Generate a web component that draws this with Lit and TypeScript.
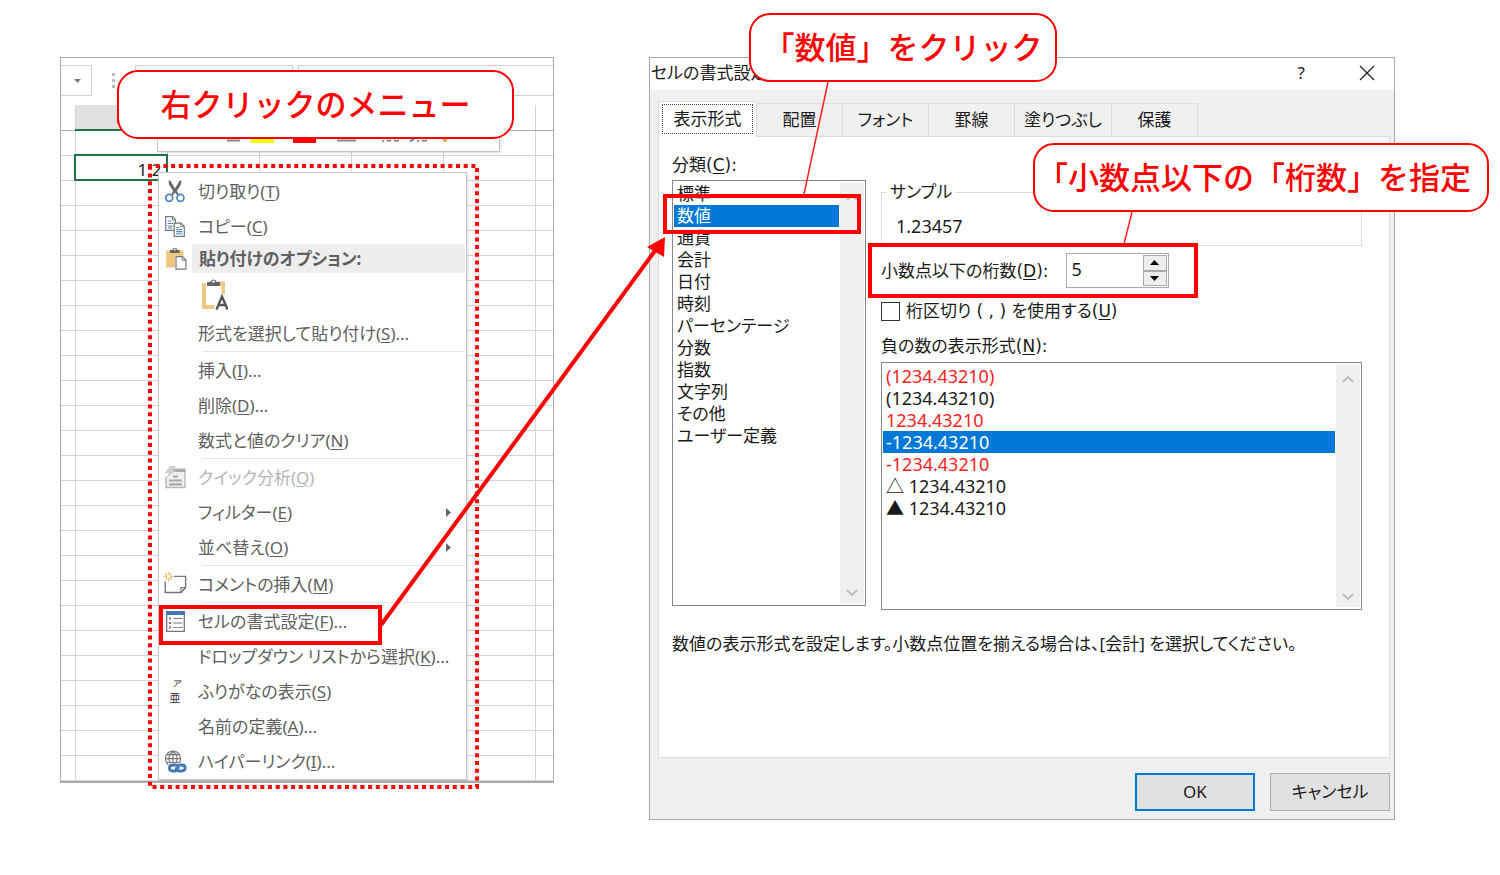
import { LitElement, html, svg, css, nothing } from "lit";
import { customElement, property, state } from "lit/decorators.js";
import { classMap } from "lit/directives/class-map.js";

type MenuEntry =
  | { kind: "item"; label: string; key: string; tail?: string; icon?: string; disabled?: boolean; sub?: boolean }
  | { kind: "heading"; label: string; icon: string }
  | { kind: "paste" }
  | { kind: "sep" };

const MENU: MenuEntry[] = [
  { kind: "item", label: "切り取り", key: "T", icon: "cut" },
  { kind: "item", label: "コピー", key: "C", icon: "copy" },
  { kind: "heading", label: "貼り付けのオプション:", icon: "paste" },
  { kind: "paste" },
  { kind: "item", label: "形式を選択して貼り付け", key: "S", tail: "..." },
  { kind: "sep" },
  { kind: "item", label: "挿入", key: "I", tail: "..." },
  { kind: "item", label: "削除", key: "D", tail: "..." },
  { kind: "item", label: "数式と値のクリア", key: "N" },
  { kind: "sep" },
  { kind: "item", label: "クイック分析", key: "Q", icon: "quick", disabled: true },
  { kind: "item", label: "フィルター", key: "E", sub: true },
  { kind: "item", label: "並べ替え", key: "O", sub: true },
  { kind: "sep" },
  { kind: "item", label: "コメントの挿入", key: "M", icon: "comment" },
  { kind: "sep" },
  { kind: "item", label: "セルの書式設定", key: "F", tail: "...", icon: "format" },
  { kind: "item", label: "ドロップダウン リストから選択", key: "K", tail: "..." },
  { kind: "item", label: "ふりがなの表示", key: "S", icon: "ruby" },
  { kind: "item", label: "名前の定義", key: "A", tail: "..." },
  { kind: "item", label: "ハイパーリンク", key: "I", tail: "...", icon: "link" },
];

const ICONS: Record<string, unknown> = {
  cut: svg`
    <path d="M4.6 .6 L6.2 .6 L11 8.4 L15.8 .6 L17.4 .6 L17 4.6 L12.8 11 L15 14.4 L13.4 15.4 L11 12.6 L8.6 15.4 L7 14.4 L9.2 11 L5 4.6 Z" fill="#666"/>
    <circle cx="5.2" cy="17.8" r="3.5" fill="#fff" stroke="#4f84bd" stroke-width="1.7"/>
    <circle cx="16.4" cy="17.8" r="3.5" fill="#fff" stroke="#4f84bd" stroke-width="1.7"/>`,
  copy: svg`
    <path d="M1.7 1.7 H8.5 L11.5 4.7 V15.3 H1.7 Z" fill="#fff" stroke="#777" stroke-width="1.2"/>
    <path d="M8.3 1.7 V5 H11.5" fill="none" stroke="#777"/>
    <path d="M3.7 6 H7 M3.7 8.5 H9 M3.7 11 H9 M3.7 13 H8" stroke="#4f84bd" stroke-width="1.1"/>
    <path d="M10.2 8.2 H17 L20.3 11.5 V21.4 H10.2 Z" fill="#fff" stroke="#777" stroke-width="1.2"/>
    <path d="M16.8 8.2 V11.7 H20.3" fill="none" stroke="#777"/>
    <path d="M12.2 12.5 H15.5 M12.2 14.5 H18.3 M12.2 16.6 H18.3 M12.2 18.7 H18.3" stroke="#4f84bd" stroke-width="1.1"/>`,
  paste: svg`
    <path d="M2.2 3.5 H19.4 V9 H11 V20.6 H2.2 Z" fill="#efc880"/>
    <path d="M6 3 H8.4 C8.6 0 13 0 13.2 3 H15.6 V6 H6 Z" fill="#666"/>
    <circle cx="10.8" cy="2.6" r="1" fill="#fff"/>
    <path d="M12 9.6 H18.5 L21.9 13 V22.2 H12 Z" fill="#fff" stroke="#777" stroke-width="1.2"/>
    <path d="M18.2 9.6 V13.3 H21.9" fill="none" stroke="#777"/>`,
  quick: svg`
    <path d="M9 3.3 H21 V21.5 H2 V11" fill="#f2f0f2" stroke="#b9b7b9" stroke-width="1.4"/>
    <path d="M9 3 H21 V6 H9 Z" fill="#a9a7a9"/>
    <path d="M6 0 H12 L8.8 4.4 H12 L2 12.4 L5 7 H1 Z" fill="#cfcdcf"/>
    <path d="M9 10.5 H14 M5 14.5 H18 M5 18.3 H18" stroke="#aaa8aa" stroke-width="2.2"/>`,
  comment: svg`
    <path d="M1.2 8.5 V19.5 H17 L21.6 14.6 V3.4 H10" fill="none" stroke="#777" stroke-width="1.4"/>
    <path d="M17 19.5 V14.6 H21.6" fill="none" stroke="#777" stroke-width="1.2"/>
    <path d="M4.5 -1 V2 M4.5 5 V8 M0 3.5 H3 M6 3.5 H9 M1.4 .4 L3.2 2.2 M7.6 .4 L5.8 2.2 M1.4 6.6 L3.2 4.8 M7.6 6.6 L5.8 4.8" stroke="#eebf6c" stroke-width="1.3"/>`,
  format: svg`
    <path d="M2.7 1.7 H20.3 V21.3 H2.7 Z" fill="#fff" stroke="#777" stroke-width="1.3"/>
    <path d="M2 1 H21 V5 H2 Z" fill="#3f78b5"/>
    <path d="M9.5 8.5 H18.5 M9.5 13 H18.5" stroke="#777" stroke-width="1"/>
    <path d="M9.5 17.5 H18.5" stroke="#777" stroke-width="1" stroke-dasharray="4 1"/>
    <path d="M5 7.5 h2 v2 h-2z M5 12 h2 v2 h-2z M5 16.5 h2 v2 h-2z" fill="#777"/>`,
  ruby: svg`
    <text x="12" y="6.5" font-size="9" font-style="italic" text-anchor="middle" fill="#222">ア</text>
    <text x="11" y="22" font-size="11" text-anchor="middle" fill="#333">亜</text>`,
  link: svg`
    <circle cx="9" cy="8.6" r="7.6" fill="#fff" stroke="#777" stroke-width="1.2"/>
    <path d="M9 1 V16.2 M1.4 8.6 H16.6 M2.8 4.6 H15.2 M2.8 12.6 H15.2 M9 1 C3.6 5 3.6 12.2 9 16.2 M9 1 C14.4 5 14.4 12.2 9 16.2" fill="none" stroke="#777" stroke-width="1.1"/>
    <path d="M4 13 H22 V23 H6 Z" fill="#fff"/>
    <path d="M12.5 21 H9 C4.2 21 4.2 15 9 15 H11.5 C14 15 14.8 17.2 13.8 18.8" fill="none" stroke="#3f78b5" stroke-width="2.8"/>
    <path d="M14.5 15 H17.5 C22.4 15 22.4 21 17.5 21 H15.5 C12.6 21 11.8 19 12.8 17.4" fill="none" stroke="#3f78b5" stroke-width="2.8"/>`,
};

const iconSvg = (name: string) =>
  html`<svg width="23" height="23" viewBox="0 0 23 23" overflow="visible" aria-hidden="true">${ICONS[name]}</svg>`;

const hot = (label: string, key: string, tail = "") => html`${label}(<u>${key}</u>)${tail}`;

const FONT = css`"Noto Sans", "Noto Sans CJK JP", sans-serif`;
const DIALOG_FONT = css`"DejaVu Sans", "Noto Sans CJK JP", sans-serif`;

@customElement("context-menu")
export class ContextMenu extends LitElement {
  static styles = css`
    :host { display: block; box-sizing: border-box; border: 1px solid #c6c6c6; background: #fff; padding: 1px 1px 0 0;
      box-shadow: 1px 2px 3px rgba(0, 0, 0, 0.15); }
    .row { display: flex; align-items: center; width: 100%; height: 35px; padding: 0; border: 0; background: none; text-align: left;
      font: 17px/24px ${FONT}; font-feature-settings: "palt"; color: #606060; white-space: nowrap; }
    .row:disabled { color: #b4b4b4; }
    .icon { flex: none; display: flex; justify-content: center; align-items: center; width: 33px; }
    .row .text { flex: 1; padding-left: 6px; }
    .heading { height: 29px; }
    .heading .text { background: #eee; font-weight: 700; line-height: 29px; padding-left: 7px; }
    .paste { height: 43px; padding-left: 39px; }
    .sep { height: 1px; margin: 0 0 1px 44px; background: #e6e6e6; }
    .arrow { width: 5px; height: 9px; margin-right: 14px; background: #666; clip-path: polygon(0 0, 100% 50%, 0 100%); }
    u { text-underline-offset: 2px; text-decoration-thickness: 1px; }
  `;
  render() {
    return MENU.map((m) => {
      if (m.kind === "sep") return html`<div class="sep" role="separator"></div>`;
      if (m.kind === "heading")
        return html`<div class="row heading"><span class="icon">${iconSvg(m.icon)}</span><span class="text">${m.label}</span></div>`;
      if (m.kind === "paste")
        return html`<button class="row paste" aria-label="値">
          <svg width="30" height="34" viewBox="0 0 30 34" aria-hidden="true">
            <path d="M6 5 V29 H16" fill="none" stroke="#efc880" stroke-width="4"/>
            <path d="M19 3.5 H27 V16 H23.5 V8 H19 Z" fill="#efc880"/>
            <path d="M9 4 H12.5 C13 0.5 18 0.5 18.5 4 H22 V8 H9 Z" fill="#666"/>
            <circle cx="15.5" cy="3.6" r="1.2" fill="#fff"/>
            <path d="M18.5 31.5 L24 18.5 L29.5 31.5 M20.5 27 H27.5" fill="none" stroke="#555" stroke-width="2.4"/>
          </svg>
        </button>`;
      return html`<button class="row" ?disabled=${m.disabled}>
        <span class="icon">${m.icon ? iconSvg(m.icon) : nothing}</span>
        <span class="text">${hot(m.label, m.key, m.tail)}</span>
        ${m.sub ? html`<span class="arrow"></span>` : nothing}
      </button>`;
    });
  }
}

@customElement("sheet-view")
export class SheetView extends LitElement {
  static styles = css`
    :host { display: block; position: relative; border: 1px solid #ababab; border-bottom-width: 2px; overflow: hidden; background: #fff;
      font: 17px/24px ${FONT}; }
    .bar { display: flex; height: 31px; margin: 7px 0 9px; }
    .box { box-sizing: border-box; border: 1px solid #cfcfcf; }
    .name { display: flex; align-items: center; justify-content: flex-end; width: 31px; border-left: 0; padding: 0 10px 0 0; background: none; }
    .dots { width: 3px; margin: 8px 20px 8px 20px; border-right: 3px dotted #bbb; box-sizing: border-box; }
    .tools { width: 158px; }
    .input { flex: 1; margin-left: 5px; border-right: 0; }
    table { width: 100%; border-collapse: collapse; table-layout: fixed; }
    th, td { height: 25px; padding: 0; box-sizing: border-box; border-right: 1px solid #d4d4d4; border-bottom: 1px solid #d4d4d4; line-height: 20px; }
    th { border-bottom-color: #ababab; font-weight: 400; }
    th.on { background: #e1e1e1; border-bottom: 2px solid #217346; color: #217346; }
    .gutter { width: 14px; }
    .col { width: 92px; }
    td.active { outline: 2px solid #217346; outline-offset: -1px; text-align: right; padding: 4px 5px 0 0; color: #222; }
    .last { border-right: 0; }
    .mini { position: absolute; left: 96px; top: 60px; width: 343px; height: 34px; box-sizing: border-box;
      border: 1px solid #c6c6c6; background: #fff; box-shadow: 1px 1px 2px rgba(0, 0, 0, 0.15); }
    context-menu { position: absolute; left: 97px; top: 114px; width: 309px; }
  `;
  render() {
    const rows = Array.from({ length: 26 }, (_, i) => i);
    return html`
      <div class="bar">
        <button class="box name" aria-label="名前ボックス"><svg width="7" height="4" viewBox="0 0 7 4"><path d="M0 0H7L3.5 4Z" fill="#777"/></svg></button>
        <span class="dots"></span>
        <span class="box tools"></span>
        <span class="box input"></span>
      </div>
      <table>
        <colgroup><col class="gutter" /><col class="col" /><col class="col" /><col class="col" /><col class="col" /><col class="col" /><col /></colgroup>
        <thead><tr><th></th><th class="on">B</th><th></th><th></th><th></th><th></th><th class="last"></th></tr></thead>
        <tbody>
          ${rows.map((r) => html`<tr><td></td>${[1, 2, 3, 4, 5].map((c) =>
            html`<td class=${classMap({ active: r === 1 && c === 1 })}>${r === 1 && c === 1 ? "1.2" : nothing}</td>`)}<td class="last"></td></tr>`)}
        </tbody>
      </table>
      <div class="mini">
        <svg width="341" height="32" viewBox="0 0 341 32" aria-hidden="true">
          <path d="M69 21.5H82M179 21.5H198" stroke="#888" stroke-width="2"/>
          <path d="M93 16H116V24H93Z" fill="#ff0"/><path d="M135 16H158V24H135Z" fill="#f00"/>
          <path d="M225 21V23M229 21Q231 23 233 21M236 21Q238.500 23 241 21M260 21V23M264 21Q266.500 23 269 21" fill="none" stroke="#777" stroke-width="1.5"/>
          <path d="M252 22.500L256 20" stroke="#4f84bd" stroke-width="2"/><path d="M285 20L287 22L289 20" fill="none" stroke="#eea040" stroke-width="2"/>
        </svg>
      </div>
      <context-menu></context-menu>
    `;
  }
}

@customElement("list-box")
export class ListBox extends LitElement {
  @property({ attribute: false }) items: { text: string; red?: boolean }[] = [];
  @property({ type: Number }) selected = 0;
  @property() name = "";
  static styles = css`
    :host { display: flex; box-sizing: border-box; border: 1px solid #828790; background: #fff; padding: 2px 1px; }
    ul { flex: 1; min-width: 0; margin: 0; padding: 0; list-style: none; }
    li { padding: 0 3px; white-space: nowrap; cursor: default; line-height: 22px; color: #1a1a1a; }
    li.red { color: #f22; }
    li.sel { background: #0078d7; color: #fff; }
    .scroll { display: flex; flex-direction: column; justify-content: space-between; align-items: center; width: 24px;
      padding: 10px 0 6px; margin-left: 1px; box-sizing: border-box; background: #f0f0f0; }
  `;
  render() {
    return html`
      <ul role="listbox" aria-label=${this.name}>
        ${this.items.map((it, i) => html`<li role="option" aria-selected=${i === this.selected}
          class=${classMap({ red: !!it.red, sel: i === this.selected })} @click=${() => (this.selected = i)}>${it.text}</li>`)}
      </ul>
      <div class="scroll" aria-hidden="true">
        <svg width="12" height="8" viewBox="0 0 12 8"><path d="M1 7L6 2L11 7" fill="none" stroke="#bdbdbd" stroke-width="2"/></svg>
        <svg width="12" height="8" viewBox="0 0 12 8"><path d="M1 1L6 6L11 1" fill="none" stroke="#bdbdbd" stroke-width="2"/></svg>
      </div>`;
  }
}

const CATEGORIES = ["標準", "数値", "通貨", "会計", "日付", "時刻", "パーセンテージ", "分数", "指数", "文字列", "その他", "ユーザー定義"].map((text) => ({ text }));
const NEGATIVES = [
  { text: "(1234.43210)", red: true },
  { text: "(1234.43210)" },
  { text: "1234.43210", red: true },
  { text: "-1234.43210" },
  { text: "-1234.43210", red: true },
  { text: "△ 1234.43210" },
  { text: "▲ 1234.43210" },
];
const TABS = [
  { text: "表示形式", cls: "t1" },
  { text: "配置", cls: "t2" },
  { text: "フォント", cls: "t2" },
  { text: "罫線", cls: "t2" },
  { text: "塗りつぶし", cls: "t3" },
  { text: "保護", cls: "t2" },
];

@customElement("format-dialog")
export class FormatDialog extends LitElement {
  @state() private digits = 5;
  static styles = css`
    :host { display: block; border: 1px solid #a8a8a8; background: #f0f0f0; color: #1a1a1a;
      font: 17px/22px ${DIALOG_FONT}; font-feature-settings: "palt"; }
    button, input { font: inherit; font-feature-settings: inherit; color: inherit; }
    u { text-underline-offset: 2px; text-decoration-thickness: 1px; }
    .title { display: flex; align-items: center; box-sizing: border-box; height: 32px; padding: 0 19px 3px 1px; background: #fff; }
    .title span { flex: 1; }
    .title button { display: flex; border: 0; padding: 0; background: none; }
    .help { margin-right: 54px; font-family: ${FONT}; }
    .body { padding: 11px 4px 8px 8px; }
    .tabs { display: flex; align-items: flex-end; }
    .tab { height: 33px; padding: 0; border: 1px solid #dcdcdc; border-width: 1px 1px 0 0; background: #f0f0f0; }
    .t2 { width: 86px; }
    .t3 { width: 97px; }
    .t1 { width: 99px; height: 36px; margin-bottom: -1px; padding: 2px 3px 3px; border-left-width: 1px; background: #fff; position: relative; }
    .t1 span { display: flex; align-items: center; justify-content: center; height: 28px; border: 1px dotted #444; }
    .panel { border: 1px solid #dcdcdc; background: #fff; padding: 17px 27px 102px 13px; }
    .cols { display: grid; grid-template-columns: 194px 1fr; gap: 15px; align-items: start; }
    .cats { margin-top: 4px; min-height: 426px; }
    .negs { margin-top: 5px; min-height: 248px; font-family: ${FONT}; font-size: 18px; }
    fieldset { margin: 27px 0 0; padding: 12px 14px 8px; border: 1px solid #dcdcdc; min-width: 0; }
    legend { margin-left: -9px; padding: 0 3px; }
    .num { font-family: ${FONT}; font-size: 18px; }
    .digits { display: flex; align-items: center; gap: 17px; margin-top: 7px; }
    .spin { display: flex; box-sizing: border-box; width: 103px; height: 35px; border: 1px solid #aaa; padding: 1px; }
    .spin input { flex: 1; min-width: 0; border: 0; outline: 0; padding: 0 0 4px 4px; background: none; font-family: ${FONT}; font-size: 18px; }
    .arrows { display: flex; flex-direction: column; width: 24px; }
    .arrows button { flex: 1; display: flex; align-items: center; justify-content: center; padding: 0; border: 1px solid #aaa; background: #eee; }
    .check { display: flex; align-items: center; gap: 6px; margin-top: 12px; }
    .check input { appearance: none; width: 19px; height: 19px; margin: 0; border: 1px solid #333; background: #fff; }
    .neglabel { margin-top: 13px; }
    .desc { margin: 23px 0 0; font-family: ${FONT}; }
    .actions { display: flex; justify-content: flex-end; gap: 15px; margin-top: 15px; }
    .actions button { width: 120px; height: 38px; border: 1px solid #adadad; background: #e1e1e1; font-family: ${FONT}; }
    .actions .ok { border: 2px solid #0078d7; }
  `;
  render() {
    return html`
      <div class="title"><span>セルの書式設定</span>
        <button class="help" aria-label="ヘルプ">?</button>
        <button aria-label="閉じる"><svg width="16" height="16" viewBox="0 0 16 16"><path d="M1 1L15 15M15 1L1 15" stroke="#222" stroke-width="1.3"/></svg></button>
      </div>
      <div class="body">
        <div class="tabs" role="tablist">${TABS.map((t, i) => html`<button role="tab" aria-selected=${i === 0} class="tab ${t.cls}"><span>${t.text}</span></button>`)}</div>
        <div class="panel">
          <div class="cols">
            <div>
              <div>${hot("分類", "C", ":")}</div>
              <list-box class="cats" name="分類" .items=${CATEGORIES} .selected=${1}></list-box>
            </div>
            <div>
              <fieldset><legend>サンプル</legend><div class="num">1.23457</div></fieldset>
              <div class="digits">
                <label for="digits">${hot("小数点以下の桁数", "D", ":")}</label>
                <div class="spin">
                  <input id="digits" .value=${String(this.digits)} />
                  <div class="arrows">
                    <button aria-label="増やす" @click=${() => this.digits++}><svg width="9" height="5" viewBox="0 0 9 5"><path d="M0 5H9L4.5 0Z"/></svg></button>
                    <button aria-label="減らす" @click=${() => (this.digits = Math.max(0, this.digits - 1))}><svg width="9" height="5" viewBox="0 0 9 5"><path d="M0 0H9L4.5 5Z"/></svg></button>
                  </div>
                </div>
              </div>
              <div class="check"><input type="checkbox" id="sep" /><label for="sep">${hot("桁区切り ( , ) を使用する", "U")}</label></div>
              <div class="neglabel">${hot("負の数の表示形式", "N", ":")}</div>
              <list-box class="negs" name="負の数の表示形式" .items=${NEGATIVES} .selected=${3}></list-box>
            </div>
          </div>
          <p class="desc">数値の表示形式を設定します。小数点位置を揃える場合は、[会計] を選択してください。</p>
        </div>
        <div class="actions"><button class="ok">OK</button><button>キャンセル</button></div>
      </div>`;
  }
}

@customElement("app-root")
export class AppRoot extends LitElement {
  static styles = css`
    :host { display: block; position: relative; min-height: 100vh; box-sizing: border-box; padding: 57px 105px 55px 60px; background: #fff; overflow: hidden; }
    .figure { display: grid; grid-template-columns: 494fr 746fr; gap: 95px; align-items: start; }
    .marks { position: absolute; left: 0; top: 0; pointer-events: none; }
    .callout { position: absolute; box-sizing: border-box; height: 69px; border: 2px solid #f00; border-radius: 21px; background: #fff;
      color: #f00; font: 500 31px/61px "Noto Sans CJK JP", sans-serif; text-align: center; white-space: nowrap; }
    .menu { left: 117px; top: 70px; width: 397px; }
    .value { left: 749px; top: 13px; width: 308px; }
    .places { left: 1033px; top: 143px; width: 456px; padding-right: 14px; }
  `;
  render() {
    return html`
      <div class="figure">
        <sheet-view></sheet-view>
        <format-dialog></format-dialog>
      </div>
      <svg class="marks" width="1500" height="875" viewBox="0 0 1500 875" aria-hidden="true">
        <rect x="150" y="166" width="327" height="621" fill="none" stroke="#f00" stroke-width="4" stroke-dasharray="4 3.7" stroke-dashoffset="2"/>
        <g fill="none" stroke="#f00" stroke-width="4">
          <rect x="161" y="607" width="219" height="36"/>
          <rect x="665" y="196" width="194" height="36"/>
          <rect x="870" y="245" width="326" height="51"/>
          <path d="M381 625L657 248"/>
        </g>
        <path d="M665 237L647 247L664 257Z" fill="#f00"/>
        <path d="M828 82L804 194M1132 212L1124 244" stroke="#f22" stroke-width="1.5"/>
      </svg>
      <div class="callout menu">右クリックのメニュー</div>
      <div class="callout value">「数値」をクリック</div>
      <div class="callout places">「小数点以下の「桁数」を指定</div>
    `;
  }
}
